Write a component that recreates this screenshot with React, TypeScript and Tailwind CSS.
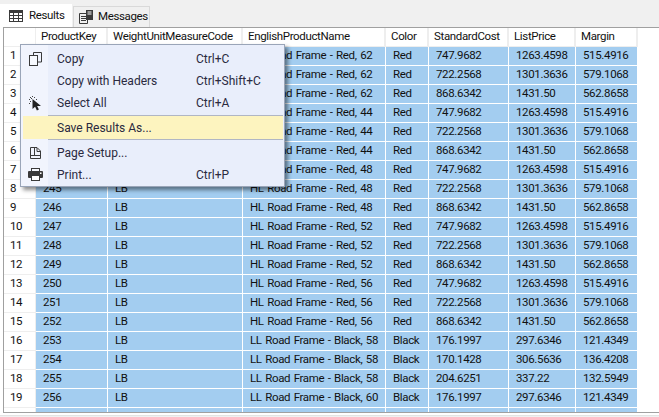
const cols = ["w-[72px]", "w-[135px]", "w-[143px]", "w-[43px]", "w-[80px]", "w-[67px]", "w-[62px]"];
const heads = ["ProductKey", "WeightUnitMeasureCode", "EnglishProductName", "Color", "StandardCost", "ListPrice", "Margin"];
const red = [["747.9682", "1263.4598", "515.4916"], ["722.2568", "1301.3636", "579.1068"], ["868.6342", "1431.50", "562.8658"]];
const sizes = [62, 44, 48, 52, 56];
const rows: string[][] = [];
for (let i = 0; i < 15; i++) {
  const c = red[i % 3];
  rows.push([String(238 + i), "LB", `HL Road Frame - Red, ${sizes[Math.floor(i / 3)]}`, "Red", c[0], c[1], c[2]]);
}
rows.push(["253", "LB", "LL Road Frame - Black, 58", "Black", "176.1997", "297.6346", "121.4349"]);
rows.push(["254", "LB", "LL Road Frame - Black, 58", "Black", "170.1428", "306.5636", "136.4208"]);
rows.push(["255", "LB", "LL Road Frame - Black, 58", "Black", "204.6251", "337.22", "132.5949"]);
rows.push(["256", "LB", "LL Road Frame - Black, 60", "Black", "176.1997", "297.6346", "121.4349"]);
rows.push(["257", "LB", "LL Road Frame - Black, 60", "Black", "170.1428", "306.5636", "136.4208"]);

function GridIcon() {
  return (
    <svg width="14" height="12" viewBox="0 0 14 12" className="shrink-0">
      <rect x="0.5" y="0.5" width="13" height="11" fill="#fff" stroke="#3a3a3a" />
      <rect x="0" y="0" width="14" height="3" fill="#3a3a3a" />
      <path d="M4.5 3v8M9.5 3v8M1 5.5h12M1 8.5h12" stroke="#3a3a3a" strokeWidth="1" />
    </svg>
  );
}
function MsgIcon() {
  return (
    <svg width="15" height="14" viewBox="0 0 15 14" className="shrink-0">
      <path d="M0.5 3.5h8v10h-8z" fill="#f0f0f0" stroke="#3a3a3a" />
      <path d="M2 6.5h5M2 8.5h5M2 10.5h5" stroke="#3a3a3a" />
      <rect x="7" y="0" width="7" height="10" fill="#3a3a3a" />
      <path d="M8.5 2h4M8.5 4h4" stroke="#fff" />
    </svg>
  );
}
function CopyIcon() {
  return (
    <svg width="13" height="14" viewBox="0 0 13 14">
      <path d="M4.5 3V0.5h8v9.5H9" fill="none" stroke="#3a3a3a" />
      <rect x="0.5" y="3.5" width="8" height="10" fill="#f7f9fe" stroke="#3a3a3a" />
    </svg>
  );
}
function SelectIcon() {
  return (
    <svg width="13" height="15" viewBox="0 0 13 15">
      <path d="M3.5 3v10l2.6-2.3 1.8 3.8 2-.9-1.8-3.7H12z" fill="#222" />
      <path d="M1 1h1v1H1zM3 0h1v1H3zM5 1h1v1H5zM0 3h1v1H0zM2 2h1v1H2zM1 5h1v1H1zM0 7h1v1H0zM7 3h1v1H7z" fill="#444" />
    </svg>
  );
}
function PageIcon() {
  return (
    <svg width="11" height="12" viewBox="0 0 11 12">
      <path d="M0.5 0.5h6.5l3.5 3.5v7.5h-10z" fill="none" stroke="#3a3a3a" />
      <path d="M4.5 1v7M1 8.5h9M7 1v3.5h3.5" fill="none" stroke="#3a3a3a" />
    </svg>
  );
}
function PrintIcon() {
  return (
    <svg width="15" height="13" viewBox="0 0 15 13">
      <rect x="3.5" y="0.5" width="8" height="4" fill="#f7f9fe" stroke="#3a3a3a" />
      <rect x="0" y="3" width="15" height="7" rx="1" fill="#3a3a3a" />
      <rect x="3.5" y="7.5" width="8" height="5" fill="#fff" stroke="#3a3a3a" />
      <rect x="12" y="4.5" width="1.5" height="1.5" fill="#fff" />
    </svg>
  );
}

function Item({ icon, label, keys, hot, h }: { icon?: React.ReactNode; label: string; keys?: string; hot?: boolean; h?: string }) {
  return (
    <div className={`flex ${h ?? "h-[22px]"} items-center ${hot ? "bg-[#fdf4bf]" : ""}`}>
      <div className="flex w-[25px] justify-center">{icon}</div>
      <div className="w-[148px] pl-[9px]">{label}</div>
      <div>{keys}</div>
    </div>
  );
}

export default function App() {
  return (
    <div className="flex h-[417px] w-[659px] flex-col overflow-hidden bg-white text-[11.5px] tracking-[-0.35px] text-[#111111] [font-family:Roboto,sans-serif]">
      <div className="flex h-[27px] shrink-0 items-end bg-[#f0f0f0]">
        <div className="flex h-[23px] w-[72px] items-center gap-[6px] bg-white pl-[9px]">
          <GridIcon />
          <span>Results</span>
        </div>
        <div className="ml-px flex h-[21px] w-[77px] items-center gap-[4px] border border-b-0 border-[#d9d9d9] pl-[5px]">
          <MsgIcon />
          <span>Messages</span>
        </div>
      </div>
      <div className="relative ml-[3px] h-[386px] shrink-0 overflow-hidden border-t border-l border-b border-[#a0a0a0] bg-white [word-spacing:1px]">
        <div className="flex h-[19px]">
          <div className="w-[32px] border-r border-b border-[#eeeeee]" />
          {heads.map((h, i) => (
            <div key={h} className={`${cols[i]} flex items-center border-r-2 border-b border-[#eeeeee] pl-[5px] whitespace-nowrap`}>{h}</div>
          ))}
        </div>
        {rows.map((r, i) => (
          <div key={i} className="flex h-[19px]">
            <div className="flex w-[32px] items-center border-r border-b border-[#eeeeee] pl-[6px]">{i + 1}</div>
            {r.map((v, j) => (
              <div key={j} className={`${cols[j]} flex items-center border-r border-b border-white bg-[#a3cdf0] pl-[7px] whitespace-nowrap`}>{v}</div>
            ))}
          </div>
        ))}
        <div className="absolute top-[16px] left-[16px] w-[265px] border border-[#9aa5b8] bg-[#e9eefb] pt-[3px] pr-[1px] pb-[1px] pl-[2px] text-[12px] tracking-normal shadow-[3px_3px_4px_rgba(0,0,0,0.45)] [word-spacing:0]">
          <div className="absolute top-0 bottom-0 left-0 w-[27px] bg-[#f1f4fd]" />
          <div className="relative text-[#2a2a40]">
            <Item icon={<CopyIcon />} label="Copy" keys="Ctrl+C" />
            <Item label="Copy with Headers" keys="Ctrl+Shift+C" />
            <Item icon={<SelectIcon />} label="Select All" keys="Ctrl+A" />
            <div className="ml-[25px] h-[2px] border-b border-[#b0b6c4]" />
            <Item label="Save Results As..." hot h="h-[23px]" />
            <div className="ml-[25px] h-[3px] border-t border-[#b0b6c4]" />
            <Item icon={<PageIcon />} label="Page Setup..." />
            <Item icon={<PrintIcon />} label="Print..." keys="Ctrl+P" h="h-[21px]" />
          </div>
        </div>
      </div>
      <div className="mt-[2px] grow border-t border-[#e3e3e3] bg-[#f0f0f0]" />
    </div>
  );
}
